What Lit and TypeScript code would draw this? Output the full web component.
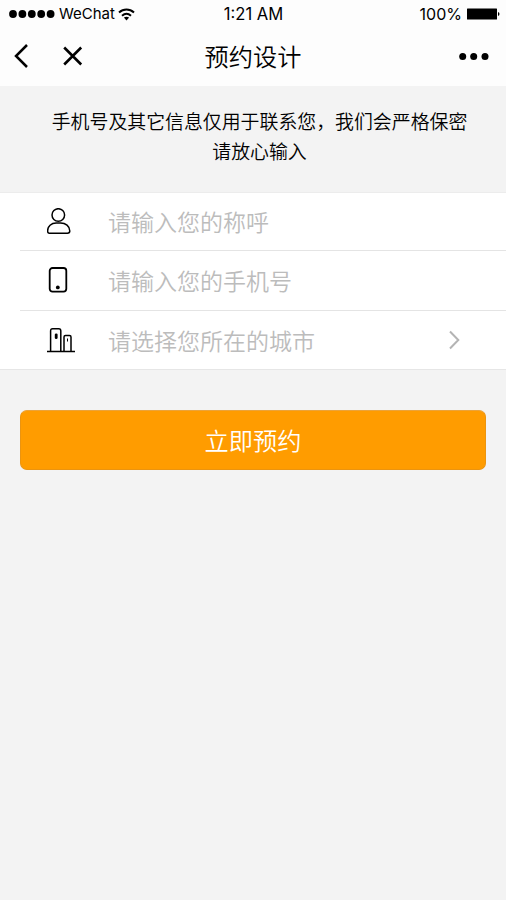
import { LitElement, html, css, svg } from "lit";
import { customElement } from "lit/decorators.js";

const person = svg`<circle cx="11.3" cy="7" r="6.3"/><path d="M2.200 25.200h18.200c1.600 0 2.400-.7 2.400-2.200C22.800 18.200 18.500 15 13.600 15H9.200C4.300 15 .6 18.200.6 23c0 1.500.5 2.200 1.600 2.200z"/>`;
const phone = svg`<rect x="2.700" y="1" width="16.600" height="23.600" rx="2.800" stroke-width="1.800"/><circle class="solid" cx="10.800" cy="20.400" r="1.900"/>`;
const city = svg`<path d="M0 24.500h28M3.600 24V4c0-1.600.6-2.200 2-2.200h6.200c1.400 0 2 .6 2 2.200v20M17 24V9.900c0-1 .5-1.500 1.500-1.500h4c1 0 1.500.5 1.500 1.500V24"/><rect class="solid" x="7.800" y="6.500" width="2.800" height="5.600" rx="1.300"/><path stroke-width="1" d="M20.500 11.500v3"/>`;

const fields = [
  { icon: person, label: "请输入您的称呼", arrow: false },
  { icon: phone, label: "请输入您的手机号", arrow: false },
  { icon: city, label: "请选择您所在的城市", arrow: true },
];

@customElement("app-root")
export class AppRoot extends LitElement {
  static styles = css`
    :host {
      display: block;
      height: 900px;
      background: #f3f3f3;
      color: #000;
      font-family: Inter, "Noto Sans CJK SC", sans-serif;
      overflow: hidden;
    }
    * { box-sizing: border-box; }
    svg { display: block; flex: none; fill: none; stroke: #000; }
    .solid { fill: #000; stroke: none; }
    header { height: 86px; background: #fdfdfd; }
    .status {
      height: 28px;
      display: grid;
      grid-template-columns: 1fr auto 1fr;
      align-items: center;
      padding: 0 6px 0 9px;
      font: 400 16px/28px Inter, sans-serif;
    }
    .time { font-size: 16.600px; padding-right: 2px; }
    .carrier, .power { display: flex; align-items: center; }
    .power { justify-content: flex-end; gap: 4px; }
    .carrier { font-size: 15px; }
    .carrier span { margin: 0 3px 0 4px; }
    .nav {
      height: 58px;
      display: grid;
      grid-template-columns: 1fr auto 1fr;
      align-items: center;
      padding: 0 17px 2px 14px;
    }
    .actions { display: flex; align-items: center; gap: 33px; }
    .more { justify-self: end; }
    h1 { margin: 0; padding-left: 3px; font: 350 24.200px/56px "Noto Sans CJK SC", sans-serif; }
    .notice {
      height: 106px;
      padding: 20px 0 0 13px;
      text-align: center;
      font: 350 18.900px/30px "Noto Sans CJK SC", sans-serif;
    }
    .notice p { margin: 0; }
    .form {
      background: #fff;
      border-top: 1px solid #ececec;
      border-bottom: 1px solid #e6e6e6;
      padding-left: 20px;
    }
    .row {
      height: 60px;
      display: flex;
      align-items: center;
      padding: 0 46px 1px 27px;
      border-bottom: 1px solid #e4e4e4;
    }
    .row:first-child { height: 58px; }
    .row:last-child { height: 58px; border-bottom: 0; padding-bottom: 0; }
    .label {
      flex: 1;
      margin-left: 32px;
      color: #bcbcbc;
      font: 350 23px/56px "Noto Sans CJK SC", sans-serif;
    }
    .arrow { stroke: #b4b4b4; stroke-width: 2; }
    .submit {
      display: block;
      width: 466px;
      height: 60px;
      margin: 40px 20px 0;
      padding: 0 0 1px;
      border: 1px solid #eb9410;
      border-top-color: #eba33a;
      border-radius: 7px;
      background: #ff9c00;
      color: #fff;
      font: 350 24.200px/56px "Noto Sans CJK SC", sans-serif;
    }
  `;

  render() {
    return html`
      <header>
        <div class="status">
          <div class="carrier">
            <svg width="46" height="10" viewBox="0 0 46 10">
              ${[4, 13.4, 22.800, 32.200, 41.600].map((x) => svg`<circle class="solid" cx=${x} cy="5" r="3.900"/>`)}
            </svg>
            <span>WeChat</span>
            <svg width="17" height="13" viewBox="0 0 17 13" stroke-width="2">
              <path d="M1 4.500c4.400-4 10.600-4 15 0M4 7.700c2.700-2.300 6.300-2.300 9 0"/>
              <path class="solid" d="M5.900 9.600c1.700-1.100 3.500-1.100 5.200 0L8.500 12.400z"/>
            </svg>
          </div>
          <div class="time">1:21 AM</div>
          <div class="power">
            <span>100%</span>
            <svg width="34" height="12" viewBox="0 0 34 12">
              <rect class="solid" x="1" y="0.500" width="30" height="11" rx="0.500"/>
              <path class="solid" d="M32 4c2 .8 2 3.200 0 4z"/>
            </svg>
          </div>
        </div>
        <div class="nav">
          <div class="actions">
            <svg width="16" height="24" viewBox="0 0 16 24" stroke-width="2.500"><path d="M13 1L2 12l11 11"/></svg>
            <svg width="20" height="20" viewBox="0 0 20 20" stroke-width="2.600"><path d="M1.200 1.500l17 17M18.200 1.500l-17 17"/></svg>
          </div>
          <h1>预约设计</h1>
          <svg class="more" width="30" height="8" viewBox="0 0 30 8">
            ${[3.700, 14.700, 26].map((x) => svg`<circle class="solid" cx=${x} cy="4.500" r="3.500"/>`)}
          </svg>
        </div>
      </header>
      <div class="notice">
        <p>手机号及其它信息仅用于联系您，我们会严格保密</p>
        <p>请放心输入</p>
      </div>
      <div class="form">
        ${fields.map(
          (f) => html`<div class="row">
            <svg width="29" height="26" viewBox="0 0 29 26" stroke-width="1.500">${f.icon}</svg>
            <span class="label">${f.label}</span>
            ${f.arrow
              ? html`<svg class="arrow" width="11" height="20" viewBox="0 0 11 20"><path d="M1 1.500L9.300 10 1 18.500"/></svg>`
              : ""}
          </div>`
        )}
      </div>
      <button class="submit">立即预约</button>
    `;
  }
}
